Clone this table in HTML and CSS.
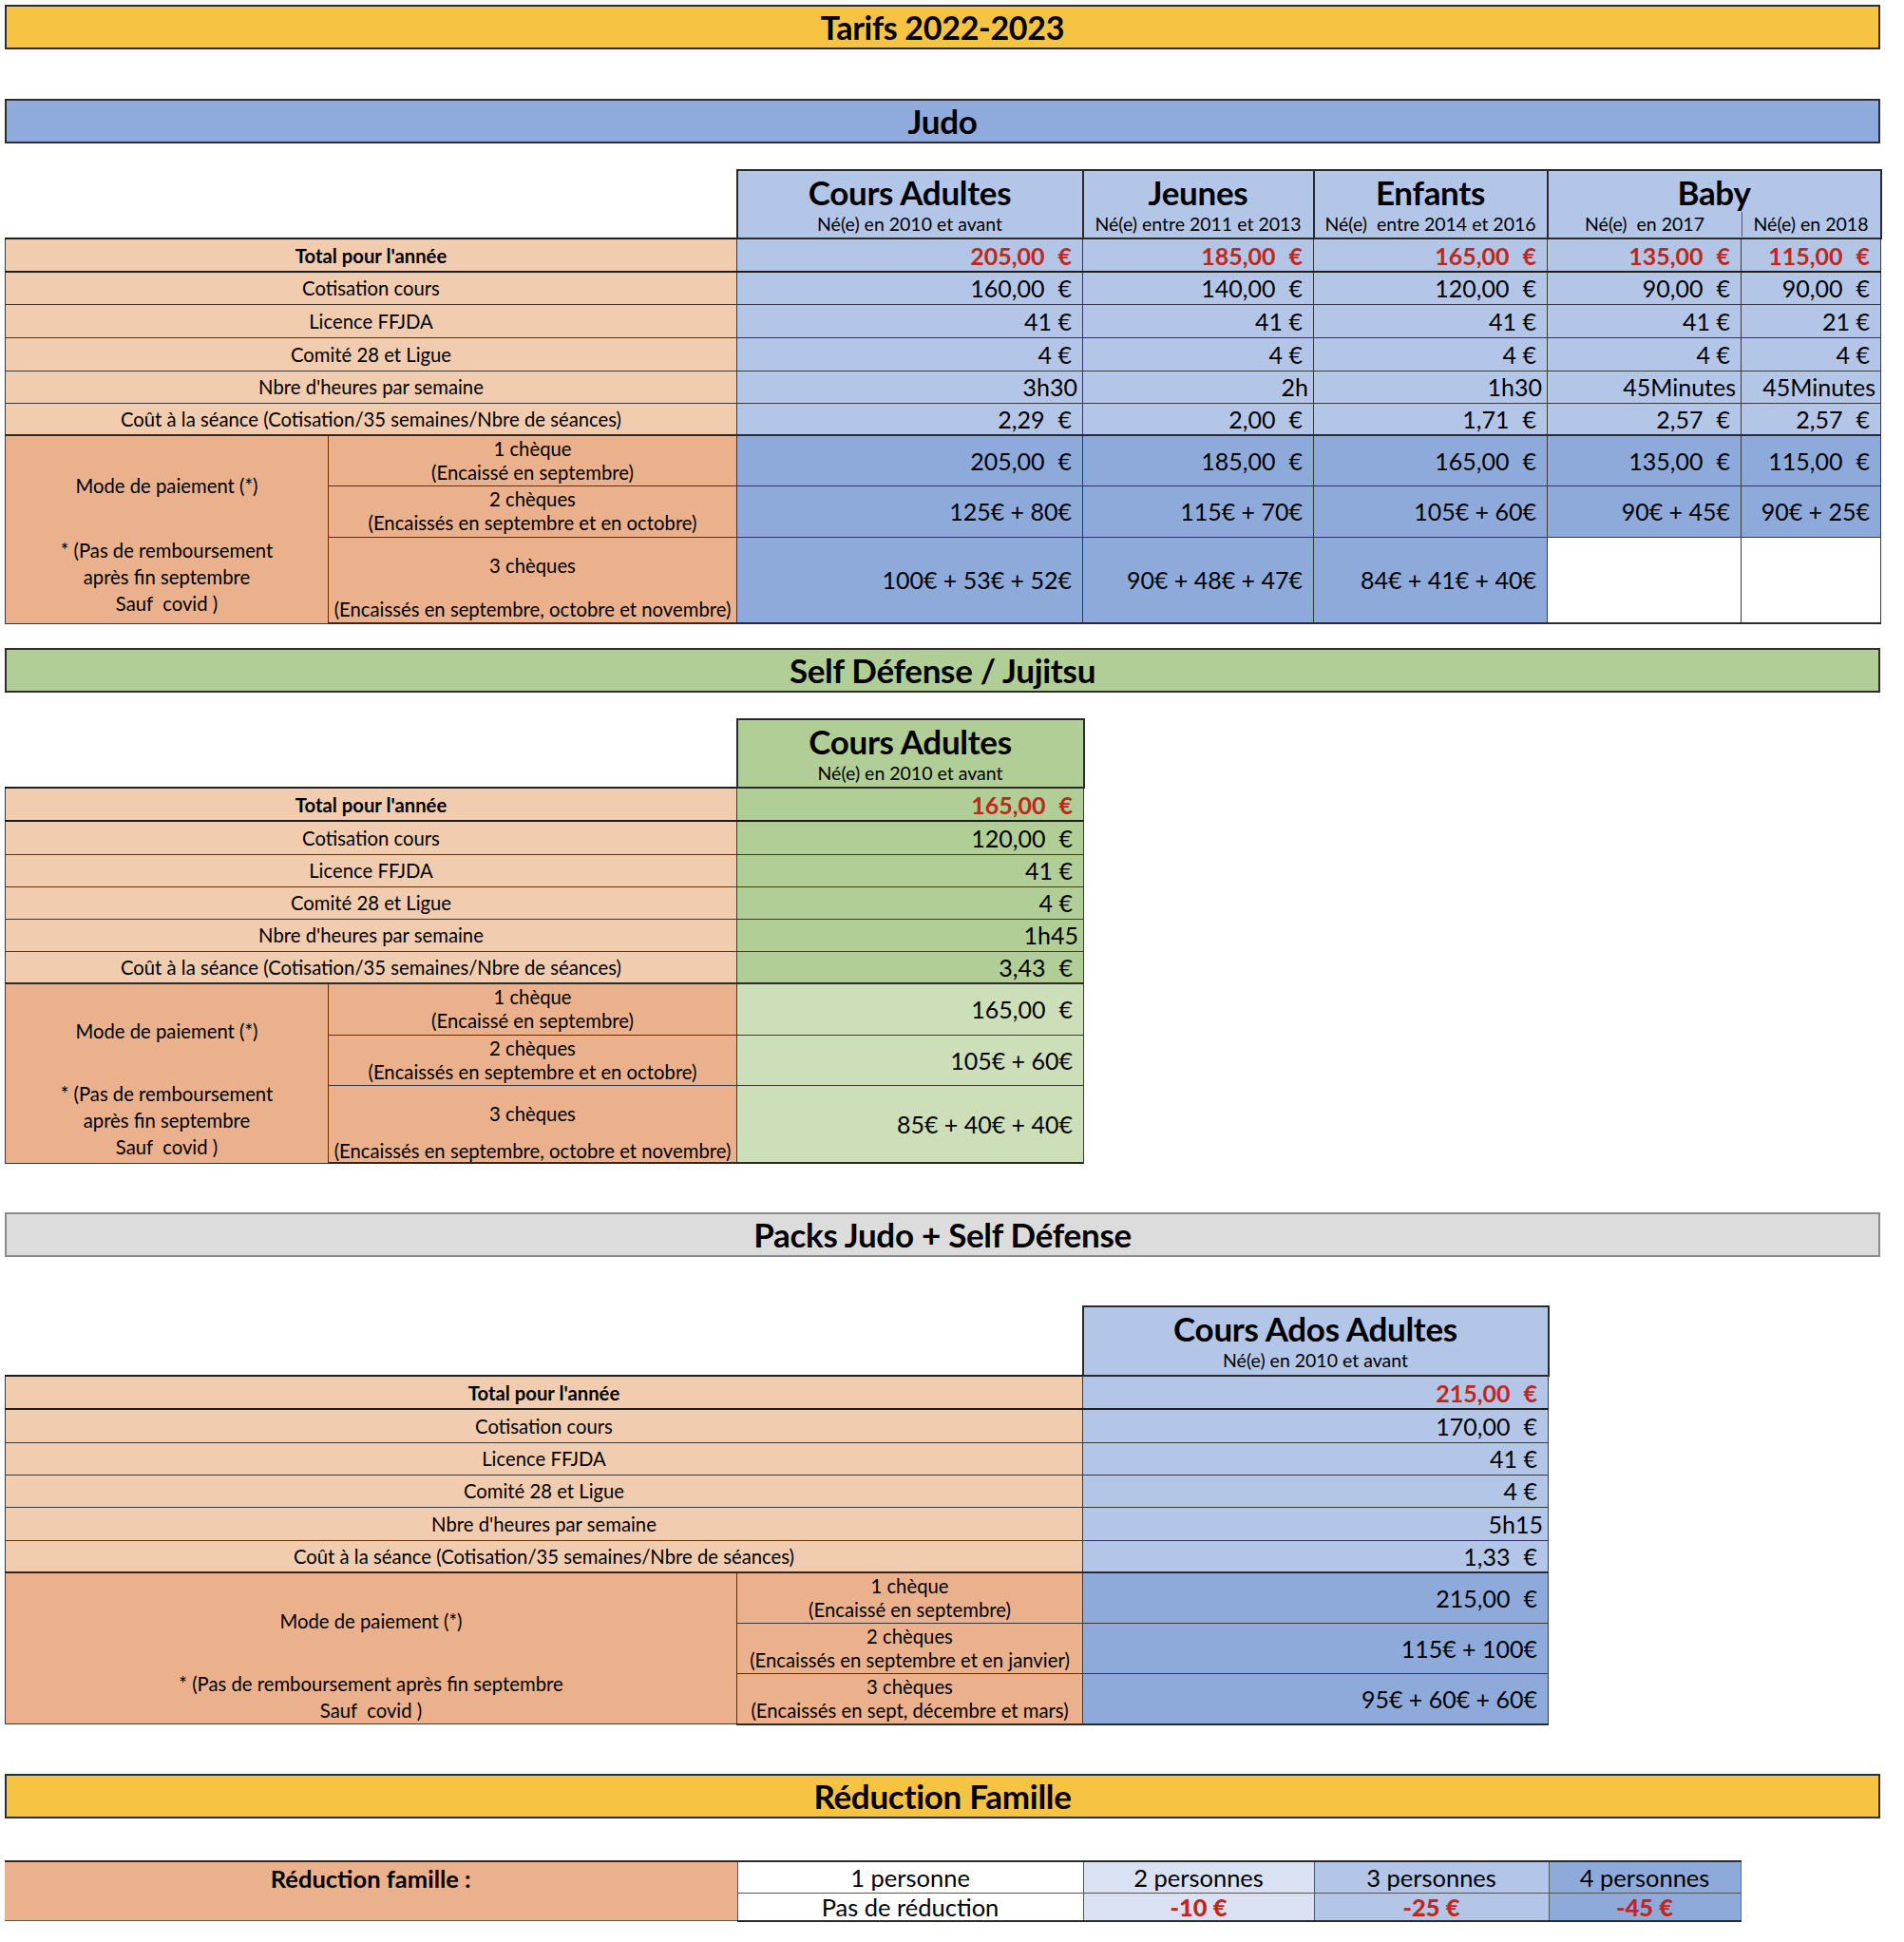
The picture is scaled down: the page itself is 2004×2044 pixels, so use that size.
FILE: index.html
```html
<!DOCTYPE html>
<html lang="fr">
<head>
<meta charset="utf-8">
<title>Tarifs 2022-2023</title>
<link rel="stylesheet" href="styles.css">
</head>
<body>
<div class="page">

  <div class="banner gold t34">Tarifs 2022-2023</div>

  <div class="banner blue gap2">Judo</div>

  <table class="grid judo gapt">
    <colgroup>
      <col style="width:340px"><col style="width:430px"><col style="width:364px"><col style="width:243px"><col style="width:246px"><col style="width:204px"><col style="width:147px">
    </colgroup>
    <tr class="r-head">
      <td colspan="2" class="blank"></td>
      <td class="hd hb"><div class="ht">Cours Adultes</div><div class="hs">Né(e) en 2010 et avant</div></td>
      <td class="hd hb"><div class="ht">Jeunes</div><div class="hs">Né(e) entre 2011 et 2013</div></td>
      <td class="hd hb"><div class="ht">Enfants</div><div class="hs">Né(e)&nbsp; entre 2014 et 2016</div></td>
      <td class="hd hb" colspan="2"><div class="ht">Baby</div><div class="hsplit"><div class="hs">Né(e)&nbsp; en 2017</div><div class="hs sep">Né(e) en 2018</div></div></td>
    </tr>
    <tr class="r35 tot">
      <td colspan="2" class="lab"><b>Total pour l'année</b></td>
      <td class="v lb red">205,00<span class="e">€</span></td>
      <td class="v lb red">185,00<span class="e">€</span></td>
      <td class="v lb red">165,00<span class="e">€</span></td>
      <td class="v lb red">135,00<span class="e">€</span></td>
      <td class="v lb red">115,00<span class="e">€</span></td>
    </tr>
    <tr class="r34">
      <td colspan="2" class="lab">Cotisation cours</td>
      <td class="v lb">160,00<span class="e">€</span></td>
      <td class="v lb">140,00<span class="e">€</span></td>
      <td class="v lb">120,00<span class="e">€</span></td>
      <td class="v lb">90,00<span class="e">€</span></td>
      <td class="v lb">90,00<span class="e">€</span></td>
    </tr>
    <tr class="r35">
      <td colspan="2" class="lab">Licence FFJDA</td>
      <td class="v lb">41 €</td><td class="v lb">41 €</td><td class="v lb">41 €</td><td class="v lb">41 €</td><td class="v lb">21 €</td>
    </tr>
    <tr class="r35">
      <td colspan="2" class="lab">Comité 28 et Ligue</td>
      <td class="v lb">4 €</td><td class="v lb">4 €</td><td class="v lb">4 €</td><td class="v lb">4 €</td><td class="v lb">4 €</td>
    </tr>
    <tr class="r34">
      <td colspan="2" class="lab">Nbre d'heures par semaine</td>
      <td class="v h lb">3h30</td><td class="v h lb">2h</td><td class="v h lb">1h30</td><td class="v h lb">45Minutes</td><td class="v h lb">45Minutes</td>
    </tr>
    <tr class="r34">
      <td colspan="2" class="lab">Coût à la séance (Cotisation/35 semaines/Nbre de séances)</td>
      <td class="v lb">2,29<span class="e">€</span></td>
      <td class="v lb">2,00<span class="e">€</span></td>
      <td class="v lb">1,71<span class="e">€</span></td>
      <td class="v lb">2,57<span class="e">€</span></td>
      <td class="v lb">2,57<span class="e">€</span></td>
    </tr>
    <tr class="r53 paytop">
      <td rowspan="3" class="lab dk mode">
        <div class="mode-in m-judo">
          <div>Mode de paiement (*)</div>
          <div class="mode-gap"></div>
          <div>* (Pas de remboursement</div>
          <div>après fin septembre</div>
          <div>Sauf&nbsp; covid )</div>
        </div>
      </td>
      <td class="lab dk chq">1 chèque<br>(Encaissé en septembre)</td>
      <td class="v mb">205,00<span class="e">€</span></td>
      <td class="v mb">185,00<span class="e">€</span></td>
      <td class="v mb">165,00<span class="e">€</span></td>
      <td class="v mb">135,00<span class="e">€</span></td>
      <td class="v mb">115,00<span class="e">€</span></td>
    </tr>
    <tr class="r54">
      <td class="lab dk chq">2 chèques<br>(Encaissés en septembre et en octobre)</td>
      <td class="v mb">125€ + 80€</td><td class="v mb">115€ + 70€</td><td class="v mb">105€ + 60€</td><td class="v mb">90€ + 45€</td><td class="v mb">90€ + 25€</td>
    </tr>
    <tr class="r91 paylast">
      <td class="lab dk chq3 j3"><div>3 chèques</div><div class="c3b">(Encaissés en septembre, octobre et novembre)</div></td>
      <td class="v mb">100€ + 53€ + 52€</td><td class="v mb">90€ + 48€ + 47€</td><td class="v mb">84€ + 41€ + 40€</td><td class="wh"></td><td class="wh"></td>
    </tr>
  </table>

  <div class="banner green gapb">Self Défense / Jujitsu</div>

  <table class="grid self gapt">
    <colgroup>
      <col style="width:340px"><col style="width:430px"><col style="width:365px">
    </colgroup>
    <tr class="r-head">
      <td colspan="2" class="blank"></td>
      <td class="hd hg"><div class="ht">Cours Adultes</div><div class="hs">Né(e) en 2010 et avant</div></td>
    </tr>
    <tr class="r35 tot">
      <td colspan="2" class="lab"><b>Total pour l'année</b></td>
      <td class="v lg red">165,00<span class="e">€</span></td>
    </tr>
    <tr class="r35"><td colspan="2" class="lab">Cotisation cours</td><td class="v lg">120,00<span class="e">€</span></td></tr>
    <tr class="r34"><td colspan="2" class="lab">Licence FFJDA</td><td class="v lg">41 €</td></tr>
    <tr class="r34"><td colspan="2" class="lab">Comité 28 et Ligue</td><td class="v lg">4 €</td></tr>
    <tr class="r34"><td colspan="2" class="lab">Nbre d'heures par semaine</td><td class="v h lg">1h45</td></tr>
    <tr class="r34"><td colspan="2" class="lab">Coût à la séance (Cotisation/35 semaines/Nbre de séances)</td><td class="v lg">3,43<span class="e">€</span></td></tr>
    <tr class="r54 paytop">
      <td rowspan="3" class="lab dk mode">
        <div class="mode-in m-self">
          <div>Mode de paiement (*)</div>
          <div class="mode-gap-s"></div>
          <div>* (Pas de remboursement</div>
          <div>après fin septembre</div>
          <div>Sauf&nbsp; covid )</div>
        </div>
      </td>
      <td class="lab dk chq">1 chèque<br>(Encaissé en septembre)</td>
      <td class="v pg">165,00<span class="e">€</span></td>
    </tr>
    <tr class="r53">
      <td class="lab dk chq">2 chèques<br>(Encaissés en septembre et en octobre)</td>
      <td class="v pg">105€ + 60€</td>
    </tr>
    <tr class="r82 paylast">
      <td class="lab dk chq3 s3"><div>3 chèques</div><div class="c3b">(Encaissés en septembre, octobre et novembre)</div></td>
      <td class="v pg">85€ + 40€ + 40€</td>
    </tr>
  </table>

  <div class="banner grey gapa">Packs Judo + Self Défense</div>

  <table class="grid packs gapc">
    <colgroup>
      <col style="width:770px"><col style="width:364px"><col style="width:490px">
    </colgroup>
    <tr class="r-head73">
      <td colspan="2" class="blank"></td>
      <td class="hd hb"><div class="ht">Cours Ados Adultes</div><div class="hs">Né(e) en 2010 et avant</div></td>
    </tr>
    <tr class="r35 tot">
      <td colspan="2" class="lab"><b>Total pour l'année</b></td>
      <td class="v lb red">215,00<span class="e">€</span></td>
    </tr>
    <tr class="r35"><td colspan="2" class="lab">Cotisation cours</td><td class="v lb">170,00<span class="e">€</span></td></tr>
    <tr class="r34"><td colspan="2" class="lab">Licence FFJDA</td><td class="v lb">41 €</td></tr>
    <tr class="r34"><td colspan="2" class="lab">Comité 28 et Ligue</td><td class="v lb">4 €</td></tr>
    <tr class="r35"><td colspan="2" class="lab">Nbre d'heures par semaine</td><td class="v h lb">5h15</td></tr>
    <tr class="r34"><td colspan="2" class="lab">Coût à la séance (Cotisation/35 semaines/Nbre de séances)</td><td class="v lb">1,33<span class="e">€</span></td></tr>
    <tr class="r53 paytop">
      <td rowspan="3" class="lab dk mode">
        <div class="mode-in m-packs">
          <div>Mode de paiement (*)</div>
          <div class="mode-gap2"></div>
          <div>* (Pas de remboursement après fin septembre</div>
          <div>Sauf&nbsp; covid )</div>
        </div>
      </td>
      <td class="lab dk chq">1 chèque<br>(Encaissé en septembre)</td>
      <td class="v mb">215,00<span class="e">€</span></td>
    </tr>
    <tr class="r53">
      <td class="lab dk chq">2 chèques<br>(Encaissés en septembre et en janvier)</td>
      <td class="v mb">115€ + 100€</td>
    </tr>
    <tr class="r53 paylast">
      <td class="lab dk chq">3 chèques<br>(Encaissés en sept, décembre et mars)</td>
      <td class="v mb">95€ + 60€ + 60€</td>
    </tr>
  </table>

  <div class="banner gold gapa">Réduction Famille</div>

  <table class="grid reduc gapr">
    <colgroup>
      <col style="width:771px"><col style="width:364px"><col style="width:243px"><col style="width:247px"><col style="width:202px">
    </colgroup>
    <tr class="r34">
      <td rowspan="2" class="lab dk rlab"><b>Réduction famille :</b></td>
      <td class="rc c1">1 personne</td>
      <td class="rc c2">2 personnes</td>
      <td class="rc c3">3 personnes</td>
      <td class="rc c4">4 personnes</td>
    </tr>
    <tr class="r29">
      <td class="rc c1">Pas de réduction</td>
      <td class="rc c2 red"><b>-10 €</b></td>
      <td class="rc c3 red"><b>-25 €</b></td>
      <td class="rc c4 red"><b>-45 €</b></td>
    </tr>
  </table>

</div>
</body>
</html>
```

FILE: styles.css
```css
html, body {
  margin: 0;
  padding: 0;
  background: #ffffff;
}

body {
  font-family: "Lato", "Liberation Sans", sans-serif;
  color: #000;
}

.page {
  width: 1974px;
  margin-left: 5px;
  padding-top: 5px;
  display: flex;
  flex-direction: column;
}

/* ---------- banners ---------- */
.banner {
  box-sizing: border-box;
  height: 47px;
  border: 2px solid #2e2e2e;
  font-weight: 700;
  font-size: 35px;
  line-height: 43px;
  text-align: center;
  letter-spacing: -0.3px;
}
.banner.t34 { font-size: 34px; }
.gold  { background: #f6c343; }
.blue  { background: #8faadc; }
.green { background: #b1ce96; }
.grey  { background: #dcdcdc; border-color: #8c8c8c; }

/* spacing between blocks */
.gap2 { margin-top: 52px; }   /* banner -> banner */
.gapt { margin-top: 27px; }   /* banner -> table */
.gapb { margin-top: 25px; }   /* table -> banner */
.gapa { margin-top: 51px; }   /* table -> banner (large) */
.gapc { margin-top: 51px; }   /* banner -> table (large) */
.gapr { margin-top: 44px; }

/* ---------- tables ---------- */
.grid {
  border-collapse: collapse;
  table-layout: fixed;
  font-size: 20.3px;
}
.judo  { width: 1974px; }
.self  { width: 1135px; }
.packs { width: 1624px; }
.reduc { width: 1827px; }

.grid td {
  padding: 0;
  border: 1px solid #3a3a3a;
  vertical-align: middle;
  white-space: nowrap;
  overflow: hidden;
}

.grid td.blank {
  border: none;
  background: #fff;
}

.r-head   { height: 72px; }
.r-head73 { height: 73px; }
.r29 { height: 29px; }
.r30 { height: 30px; }
.r34 { height: 34px; }
.r35 { height: 35px; }
.r36 { height: 36px; }
.r53 { height: 53px; }
.r54 { height: 54px; }
.r82 { height: 82px; }
.r91 { height: 91px; }

.tot td { border-top: 2px solid #1e1e1e; border-bottom: 2px solid #1e1e1e; }
.paytop td { border-top: 2px solid #2a2a2a; }
.paylast td { border-bottom: 2px solid #2a2a2a; }

/* header cells */
.hd {
  vertical-align: top !important;
  text-align: center;
  border: 2px solid #2a2a2a !important;
}
.hb { background: #b4c6e7; }
.hg { background: #b1ce96; }
.ht {
  font-weight: 700;
  font-size: 35px;
  line-height: 38px;
  padding-top: 3px;
  letter-spacing: -0.3px;
}
.hs {
  font-size: 19.5px;
  line-height: 26px;
}
.ht + .hs, .ht + .hsplit { margin-top: 2px; }
.hsplit {
  display: grid;
  grid-template-columns: 203px 1fr;
}
.hsplit .sep { border-left: 1px solid #555; }

/* labels */
.lab {
  background: #f2ccaf;
  text-align: center;
}
.lab.dk { background: #ebb18d; }
.chq { line-height: 25px; }
.chq3 { vertical-align: top !important; line-height: 24px; padding-top: 17px !important; }
.j3 .c3b { margin-top: 22px; }
.s3 .c3b { margin-top: 15px; }

.mode { vertical-align: top !important; }
.mode-in { line-height: 28px; }
.m-judo  { padding-top: 38px; }
.m-self  { padding-top: 35px; }
.m-packs { padding-top: 36px; }
.mode-gap   { height: 40px; }
.mode-gap-s { height: 38px; }
.mode-gap2  { height: 38px; }

/* values */
.v {
  text-align: right;
  font-size: 25px;
  padding-right: 11px !important;
}
.v.h { padding-right: 5px !important; }
.v .e { margin-left: 14px; }
.lb { background: #b4c6e7; }
.mb { background: #8eaadb; }
.lg { background: #b1ce96; }
.pg { background: #ccdfb9; }
.wh { background: #ffffff; }

.red { color: #c0271c; font-weight: 700; }

/* reduction */
.reduc td { border-color: #555; }
.reduc tr:first-child td { border-top: 2px solid #2a2a2a; }
.reduc tr:last-child td { border-bottom: 2px solid #2a2a2a; }
.rlab {
  vertical-align: top !important;
  font-size: 25.5px;
  line-height: 35px;
  border-left: none !important;
}
.grid td.rc {
  text-align: center;
  font-size: 25.5px;
  line-height: 26px;
  overflow: visible;
}
.c1 { background: #ffffff; }
.c2 { background: #dae1f2; }
.c3 { background: #b4c6e7; }
.c4 { background: #8eaadb; border-left-color: #8eaadb !important; border-right: 1px solid #5a6e96 !important; }
```
